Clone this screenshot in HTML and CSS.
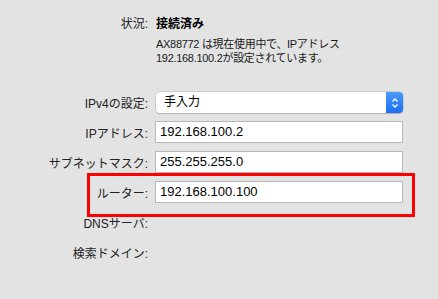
FILE: index.html
```html
<!DOCTYPE html>
<html lang="ja">
<head>
    <meta charset="UTF-8">
    <title>ネットワーク</title>
    <link rel="stylesheet" href="styles.css">
</head>
<body>
    <div class="pane">
        <!-- status -->
        <div class="status">
            <span class="label">状況:</span>
            <span class="status-value">接続済み</span>
        </div>
        <p class="desc">AX88772 は現在使用中で、IPアドレス<br>192.168.100.2が設定されています。</p>

        <!-- ipv4 settings -->
        <div class="row row-select">
            <span class="label">IPv4の設定:</span>
            <div class="select">
                <span class="select-text">手入力</span>
                <span class="select-btn">
                    <svg width="8" height="12" viewBox="0 0 8 12">
                        <path d="M1.5 4.5 L4 2 L6.5 4.5" fill="none" stroke="#fff" stroke-width="1.4"/>
                        <path d="M1.5 7.5 L4 10 L6.5 7.5" fill="none" stroke="#fff" stroke-width="1.4"/>
                    </svg>
                </span>
            </div>
        </div>
        <div class="row">
            <span class="label">IPアドレス:</span>
            <div class="field">192.168.100.2</div>
        </div>
        <div class="row">
            <span class="label">サブネットマスク:</span>
            <div class="field">255.255.255.0</div>
        </div>
        <div class="row row-mark">
            <span class="label">ルーター:</span>
            <div class="field">192.168.100.100</div>
        </div>
        <div class="row row-empty">
            <span class="label">DNSサーバ:</span>
        </div>
        <div class="row row-empty">
            <span class="label">検索ドメイン:</span>
        </div>
    </div>
</body>
</html>
```

FILE: styles.css
```css
* {
    margin: 0;
    padding: 0;
    box-sizing: border-box;
}

body {
    background-color: #e3e3e3;
    font-family: "Liberation Sans", "Noto Sans CJK JP", sans-serif;
    color: #000;
}

.pane {
    width: 438px;
    height: 299px;
    padding-top: 16px;
}

.label {
    width: 148px;
    flex: none;
    text-align: right;
    font-size: 12px;
    color: #222;
}

.status {
    display: flex;
    gap: 8px;
    line-height: 16px;
}

.status-value {
    font-size: 12px;
    font-weight: bold;
}

.desc {
    margin: 5px 0 0 156px;
    font-size: 11px;
    line-height: 14px;
    color: #1a1a1a;
    letter-spacing: -0.3px;
}

.row {
    display: flex;
    align-items: center;
    gap: 7px;
    height: 22px;
    margin-top: 8px;
}

.row-select {
    margin-top: 27px;
    height: 21px;
}

.row-empty {
    margin-top: 8px;
}

.field {
    width: 248px;
    height: 22px;
    background-color: #fff;
    border: 1px solid #b8b8b8;
    font-size: 13px;
    line-height: 20px;
    padding-left: 4px;
}

.select {
    display: flex;
    width: 247px;
    height: 21px;
    margin-left: 1px;
    background-color: #fff;
    border-radius: 4px;
    box-shadow: 0 0 0 0.5px #b0b0b0, 0 1px 1px rgba(0, 0, 0, 0.18);
}

.select-text {
    flex: 1;
    font-size: 12px;
    line-height: 21px;
    padding-left: 8px;
}

.select-btn {
    width: 17px;
    display: flex;
    align-items: center;
    justify-content: center;
    background: linear-gradient(#4a9bfa, #1a6ff4);
    border-radius: 0 4px 4px 0;
}

/* red annotation box round the router row */
.row-mark {
    position: relative;
}

.row-mark::after {
    content: "";
    position: absolute;
    left: 87px;
    top: -8px;
    width: 322px;
    height: 38px;
    border: 3px solid #f00;
}
```
